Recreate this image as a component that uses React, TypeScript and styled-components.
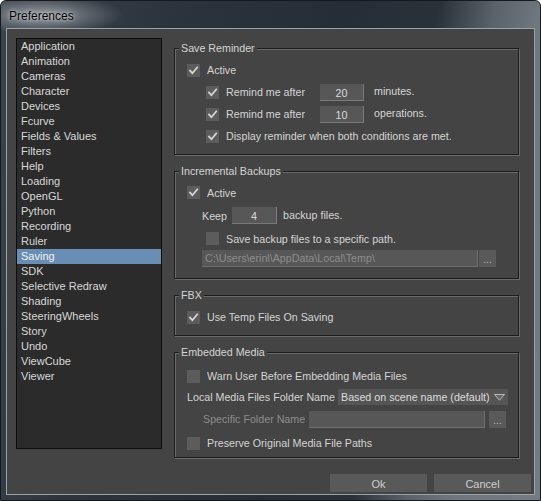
import React from "react";
import styled, { createGlobalStyle } from "styled-components";

const GlobalStyle = createGlobalStyle`
  html, body { margin: 0; padding: 0; background: #ffffff; }
  body { font-family: "Liberation Sans", Arial, sans-serif; font-size: 10.7px; }
  * { box-sizing: border-box; }
`;

const Window = styled.div`
  width: 541px;
  height: 501px;
  border: 1px solid #161a20;
  border-radius: 6px 6px 0 0;
  padding: 0 5px 5px 5px;
  display: flex;
  flex-direction: column;
  background:
    radial-gradient(ellipse 80px 20px at 42px 14px, rgba(205, 210, 214, 0.6), rgba(205, 210, 214, 0) 100%),
    linear-gradient(100deg, #3b434c 0%, #2b333c 28%, #252d36 55%, #293139 70%, #5a626a 79%, #6f777e 86%, #747c83 100%);
`;

const TitleBar = styled.div`
  height: 27px;
  display: flex;
  align-items: center;
  padding-left: 3px;
  flex: none;
`;

const TitleText = styled.span`
  font-family: "Liberation Sans", Arial, sans-serif;
  font-size: 12px;
  color: #050505;
  text-shadow: 0 0 6px rgba(255, 255, 255, 0.7), 0 0 3px rgba(255, 255, 255, 0.5);
  padding-top: 2px;
`;

const Client = styled.div`
  flex: 1;
  border: 1px solid #9aa3ac;
  background: #444444;
  padding: 9px 2px 1px 9px;
  display: flex;
  flex-direction: column;
`;

const MainRow = styled.div`
  height: 420px;
  display: flex;
  align-items: flex-start;
`;

const CategoryList = styled.ul`
  list-style: none;
  margin: 0;
  padding: 0;
  width: 146px;
  height: 411px;
  background: #2b2b2b;
  border: 1px solid #0e0e0e;
  flex: none;
`;

const CategoryItem = styled.li<{ $selected?: boolean }>`
  height: 15px;
  line-height: 15px;
  padding-left: 4px;
  font-size: 11px;
  color: ${(p) => (p.$selected ? "#eef2f6" : "#d8d8d8")};
  background: ${(p) => (p.$selected ? "#6a8db3" : "transparent")};
  white-space: nowrap;
`;

const Settings = styled.div`
  margin-left: 12px;
  margin-top: 4px;
  width: 345px;
  display: flex;
  flex-direction: column;
  gap: 10px;
`;

const Group = styled.fieldset<{ $pt: number; $pb: number }>`
  margin: 0;
  border: 1px solid #1c1c1c;
  box-shadow: 1px 1px 0 #6a6a6a, inset 1px 1px 0 #6a6a6a;
  padding: ${(p) => `${p.$pt}px 0 ${p.$pb}px 12px`};
  min-width: 0;
`;

const Legend = styled.legend`
  color: #d4d4d4;
  line-height: 13px;
  padding: 0 2px;
  margin-left: -8px;
  background: #444444;
`;

const Row = styled.div<{ $h?: number; $indent?: number }>`
  height: ${(p) => p.$h ?? 22}px;
  display: flex;
  align-items: center;
  padding-left: ${(p) => p.$indent ?? 0}px;
`;

const Box = styled.span`
  width: 13px;
  height: 13px;
  background: #5c5c5c;
  display: inline-flex;
  align-items: center;
  justify-content: center;
  flex: none;
  margin-right: 7px;
`;

const Label = styled.span<{ $w?: number; $disabled?: boolean }>`
  color: ${(p) => (p.$disabled ? "#8c8c8c" : "#d4d4d4")};
  white-space: nowrap;
  ${(p) => (p.$w ? `width: ${p.$w}px; flex: none;` : "")}
`;

const Suffix = styled.span<{ $gap: number }>`
  color: #d4d4d4;
  margin-left: ${(p) => p.$gap}px;
  white-space: nowrap;
  position: relative;
  top: -1px;
`;

const NumberField = styled.span<{ $w: number }>`
  width: ${(p) => p.$w}px;
  height: 17px;
  background: #575757;
  border-right: 1px solid #7a7a7a;
  border-bottom: 1px solid #7a7a7a;
  color: #dcdcdc;
  display: inline-flex;
  align-items: center;
  justify-content: center;
  padding-top: 2px;
  flex: none;
`;

const TextField = styled.span<{ $w: number }>`
  width: ${(p) => p.$w}px;
  height: 17px;
  background: #575757;
  border-right: 1px solid #6e6e6e;
  border-bottom: 1px solid #6e6e6e;
  color: #8c8c8c;
  display: inline-flex;
  align-items: center;
  padding-left: 3px;
  white-space: nowrap;
  overflow: hidden;
  flex: none;
`;

const BrowseButton = styled.span<{ $gap: number }>`
  width: 17px;
  height: 17px;
  margin-left: ${(p) => p.$gap}px;
  background: #5a5a5a;
  color: #bdbdbd;
  display: inline-flex;
  align-items: flex-end;
  justify-content: center;
  padding-bottom: 2px;
  font-size: 10px;
  line-height: 10px;
  flex: none;
`;

const Dropdown = styled.span`
  width: 170px;
  height: 16px;
  margin-left: 8px;
  background: #555555;
  color: #dcdcdc;
  display: inline-flex;
  align-items: center;
  justify-content: space-between;
  padding: 0 3px 0 3px;
  white-space: nowrap;
  flex: none;
`;

const ButtonBar = styled.div`
  margin-top: 16px;
  height: 18px;
  display: flex;
  justify-content: flex-end;
  gap: 7px;
  padding-right: 1px;
`;

const DialogButton = styled.button`
  width: 97px;
  height: 18px;
  border: none;
  background: #595959;
  color: #cfcfcf;
  font-family: "Liberation Sans", Arial, sans-serif;
  font-size: 11px;
  padding: 1px 0 0 0;
`;

const CheckBox: React.FC<{ checked?: boolean }> = ({ checked }) => (
  <Box>
    {checked && (
      <svg width="11" height="11" viewBox="0 0 11 11">
        <path d="M2 5.6 L4.4 8.2 L9.2 2.4" fill="none" stroke="#d6d6d6" strokeWidth="1.8" strokeLinecap="square" />
      </svg>
    )}
  </Box>
);

const categories = [
  "Application", "Animation", "Cameras", "Character", "Devices", "Fcurve",
  "Fields & Values", "Filters", "Help", "Loading", "OpenGL", "Python",
  "Recording", "Ruler", "Saving", "SDK", "Selective Redraw", "Shading",
  "SteeringWheels", "Story", "Undo", "ViewCube", "Viewer",
];

export default function App() {
  return (
    <>
      <GlobalStyle />
      <Window>
        <TitleBar>
          <TitleText>Preferences</TitleText>
        </TitleBar>
        <Client>
          <MainRow>
            <CategoryList>
              {categories.map((c) => (
                <CategoryItem key={c} $selected={c === "Saving"}>{c}</CategoryItem>
              ))}
            </CategoryList>
            <Settings>
              <Group $pt={4} $pb={7}>
                <Legend>Save Reminder</Legend>
                <Row>
                  <CheckBox checked />
                  <Label>Active</Label>
                </Row>
                <Row $indent={19}>
                  <CheckBox checked />
                  <Label $w={94}>Remind me after</Label>
                  <NumberField $w={44}>20</NumberField>
                  <Suffix $gap={10}>minutes.</Suffix>
                </Row>
                <Row $indent={19}>
                  <CheckBox checked />
                  <Label $w={94}>Remind me after</Label>
                  <NumberField $w={44}>10</NumberField>
                  <Suffix $gap={10}>operations.</Suffix>
                </Row>
                <Row $indent={19}>
                  <CheckBox checked />
                  <Label>Display reminder when both conditions are met.</Label>
                </Row>
              </Group>

              <Group $pt={3} $pb={11}>
                <Legend>Incremental Backups</Legend>
                <Row $h={23}>
                  <CheckBox checked />
                  <Label>Active</Label>
                </Row>
                <Row $h={23} $indent={15}>
                  <Label $w={30}>Keep</Label>
                  <NumberField $w={45}>4</NumberField>
                  <Suffix $gap={6}>backup files.</Suffix>
                </Row>
                <Row $h={23} $indent={19}>
                  <CheckBox />
                  <Label>Save backup files to a specific path.</Label>
                </Row>
                <Row $h={17} $indent={15}>
                  <TextField $w={276}>C:\Users\erinl\AppData\Local\Temp\</TextField>
                  <BrowseButton $gap={1}>...</BrowseButton>
                </Row>
              </Group>

              <Group $pt={4} $pb={7}>
                <Legend>FBX</Legend>
                <Row>
                  <CheckBox checked />
                  <Label>Use Temp Files On Saving</Label>
                </Row>
              </Group>

              <Group $pt={6} $pb={2}>
                <Legend>Embedded Media</Legend>
                <Row>
                  <CheckBox />
                  <Label>Warn User Before Embedding Media Files</Label>
                </Row>
                <Row $h={20} $indent={-4}>
                  <Label $w={143}>Local Media Files Folder Name</Label>
                  <Dropdown>
                    <span>Based on scene name (default)</span>
                    <svg width="11" height="7" viewBox="0 0 11 7">
                      <polygon points="0.5,0.5 10.5,0.5 5.5,6.2" fill="#666666" stroke="#b8b8b8" strokeWidth="1" />
                    </svg>
                  </Dropdown>
                </Row>
                <Row $h={24} $indent={16}>
                  <Label $w={106} $disabled>Specific Folder Name</Label>
                  <TextField $w={176} />
                  <BrowseButton $gap={4}>...</BrowseButton>
                </Row>
                <Row $h={24}>
                  <CheckBox />
                  <Label>Preserve Original Media File Paths</Label>
                </Row>
              </Group>
            </Settings>
          </MainRow>
          <ButtonBar>
            <DialogButton>Ok</DialogButton>
            <DialogButton>Cancel</DialogButton>
          </ButtonBar>
        </Client>
      </Window>
    </>
  );
}
